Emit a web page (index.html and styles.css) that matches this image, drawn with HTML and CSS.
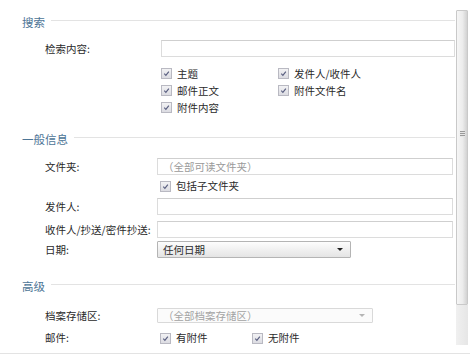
FILE: index.html
```html
<!DOCTYPE html>
<html lang="zh">
<head>
<meta charset="utf-8">
<link rel="stylesheet" href="styles.css">
</head>
<body>
<div class="window">
  <div class="content">
    <div class="section-head s1"><span>搜索</span></div>
    <div class="row r-search">
      <label class="lbl">检索内容:</label>
      <div class="input input-a"></div>
    </div>
    <div class="cb-grid">
      <div class="cb"><span class="box"><svg viewBox="0 0 10 10"><path d="M2.5 5.2 L4.3 7 L7.6 2.8"/></svg></span>主题</div>
      <div class="cb"><span class="box"><svg viewBox="0 0 10 10"><path d="M2.5 5.2 L4.3 7 L7.6 2.8"/></svg></span>发件人/收件人</div>
      <div class="cb"><span class="box"><svg viewBox="0 0 10 10"><path d="M2.5 5.2 L4.3 7 L7.6 2.8"/></svg></span>邮件正文</div>
      <div class="cb"><span class="box"><svg viewBox="0 0 10 10"><path d="M2.5 5.2 L4.3 7 L7.6 2.8"/></svg></span>附件文件名</div>
      <div class="cb"><span class="box"><svg viewBox="0 0 10 10"><path d="M2.5 5.2 L4.3 7 L7.6 2.8"/></svg></span>附件内容</div>
    </div>

    <div class="section-head s2"><span>一般信息</span></div>
    <div class="row r-folder">
      <label class="lbl">文件夹:</label>
      <div class="input placeholder">（全部可读文件夹）</div>
    </div>
    <div class="row r-sub">
      <span></span>
      <div class="cb"><span class="box"><svg viewBox="0 0 10 10"><path d="M2.5 5.2 L4.3 7 L7.6 2.8"/></svg></span>包括子文件夹</div>
    </div>
    <div class="row r-from">
      <label class="lbl">发件人:</label>
      <div class="input"></div>
    </div>
    <div class="row r-to">
      <label class="lbl">收件人/抄送/密件抄送:</label>
      <div class="input"></div>
    </div>
    <div class="row r-date">
      <label class="lbl">日期:</label>
      <div class="select"><span>任何日期</span><span class="arrow"></span></div>
    </div>

    <div class="section-head s3"><span>高级</span></div>
    <div class="row r-archive">
      <label class="lbl">档案存储区:</label>
      <div class="select disabled"><span>（全部档案存储区）</span><span class="arrow"></span></div>
    </div>
    <div class="row r-mail">
      <label class="lbl">邮件:</label>
      <div class="cb-pair">
        <div class="cb"><span class="box"><svg viewBox="0 0 10 10"><path d="M2.5 5.2 L4.3 7 L7.6 2.8"/></svg></span>有附件</div>
        <div class="cb"><span class="box"><svg viewBox="0 0 10 10"><path d="M2.5 5.2 L4.3 7 L7.6 2.8"/></svg></span>无附件</div>
      </div>
    </div>
  </div>
  <div class="scrollbar">
    <div class="thumb"><span class="grip"></span></div>
    <div class="track"></div>
  </div>
</div>
</body>
</html>
```
FILE: styles.css
```css
html, body {
  margin: 0;
  padding: 0;
  background: #ffffff;
}
body {
  font-family: "Noto Sans CJK SC", "Noto Sans", sans-serif;
  font-size: 10.5px;
  color: #2a2a2a;
}
.window {
  display: flex;
  height: 353px;
  width: 470px;
  border-bottom: 1px solid #e3e3e3;
}
.content {
  width: 456px;
}
.section-head {
  display: flex;
  align-items: center;
  height: 14px;
  padding-left: 22px;
  color: #4d7596;
  font-size: 11.5px;
}
.section-head::after {
  content: "";
  flex: 1;
  height: 1px;
  background: #e3e3e3;
  margin-left: 6px;
  margin-right: 1px;
  margin-top: -3px;
}
.s1 { margin-top: 15px; }
.s2 { margin-top: 16px; }
.s3 { margin-top: 21px; }

.row {
  display: grid;
  grid-template-columns: 112px 296px;
  padding-left: 45px;
  align-items: center;
}
.lbl {
  line-height: 14px;
  white-space: nowrap;
}
.input {
  height: 15px;
  border: 1px solid #dcdcdc;
  border-top-color: #cfcfcf;
  background: #fff;
  line-height: 15px;
  padding-left: 5px;
  box-sizing: content-box;
}
.input-a {
  margin-left: 4px;
  width: 287px;
}
.placeholder {
  color: #9a9a9a;
}
.r-search { margin-top: 11px; }
.r-folder { margin-top: 12px; }
.r-sub { height: 20px; margin-top: 1px; }
.r-from { margin-top: 2px; }
.r-to { margin-top: 6px; }
.r-date { margin-top: 3px; }
.r-archive { margin-top: 15px; }
.r-mail { height: 16px; margin-top: 7px; }

.cb-grid {
  display: grid;
  grid-template-columns: 117px 150px;
  grid-auto-rows: 17px;
  margin-left: 161px;
  margin-top: 8px;
  align-items: center;
}
.cb {
  display: flex;
  align-items: center;
  gap: 5px;
  line-height: 14px;
  white-space: nowrap;
}
.r-sub .cb, .r-mail .cb { margin-left: 3px; }
.box {
  width: 9px;
  height: 9px;
  border: 1px solid #b9b9c2;
  background: linear-gradient(#f2f2f4, #dcdce2);
  display: inline-flex;
}
.box svg {
  width: 9px;
  height: 9px;
  fill: none;
  stroke: #5a5f80;
  stroke-width: 1.3;
}
.cb-pair {
  display: grid;
  grid-template-columns: 92px 100px;
}
.select {
  display: flex;
  align-items: center;
  justify-content: space-between;
  width: 180px;
  height: 15px;
  border: 1px solid #b4b4b4;
  border-radius: 1px;
  background: linear-gradient(#fdfdfd, #e4e4e4);
  padding: 0 7px 0 5px;
  line-height: 15px;
  color: #2d2d2d;
}
.arrow {
  width: 0;
  height: 0;
  border-left: 3px solid transparent;
  border-right: 3px solid transparent;
  border-top: 3px solid #222;
}
.select.disabled {
  width: 202px;
  height: 13px;
  line-height: 13px;
  border-color: #d9d9d9;
  background: #fbfbfb;
  color: #a3a3a3;
}
.select.disabled .arrow {
  border-top-color: #b5b5b5;
}
.scrollbar {
  width: 12px;
  margin-top: 10px;
  height: 335px;
  display: flex;
  flex-direction: column;
}
.thumb {
  height: 295px;
  box-sizing: border-box;
  border: 1px solid #c9c9c9;
  border-radius: 1px;
  background: linear-gradient(90deg, #f6f6f6, #ececec 55%, #d2d2d2);
  display: flex;
  justify-content: center;
  padding-top: 120px;
}
.grip {
  width: 5px;
  height: 6px;
  background: repeating-linear-gradient(#9a9a9a 0 1px, #e6e6e6 1px 2px);
}
.track {
  flex: 1;
  background: linear-gradient(90deg, #f0f0f0, #e6e6e6);
}
```
